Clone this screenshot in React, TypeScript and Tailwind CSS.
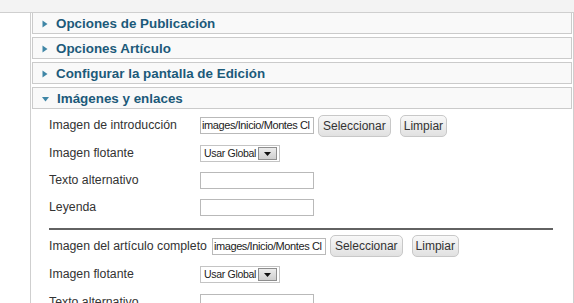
import React from 'react'

// ─── Small pieces ─────────────────────────────────────────────────────────────

function Arrow({ open }: { open?: boolean }) {
  return open ? (
    <svg width="7" height="6" viewBox="0 0 7 6" className="flex-shrink-0">
      <path d="M0 1 L7 1 L3.5 5.5 Z" fill="#3f86a6" />
    </svg>
  ) : (
    <svg width="6" height="8" viewBox="0 0 6 8" className="flex-shrink-0">
      <path d="M0.5 0.5 L5.5 4 L0.5 7.5 Z" fill="#3f86a6" />
    </svg>
  )
}

function PanelHeader({ title, open, first }: { title: string; open?: boolean; first?: boolean }) {
  return (
    <div
      className={`flex items-center bg-[#f9f9f9] border border-[#cbcbcb] ${
        first ? 'border-t-0 h-[21px]' : 'h-[22px]'
      } mb-[3px] pl-[9px] pt-[2px] gap-[8px]`}
    >
      <Arrow open={open} />
      <span className="text-[13.4px] font-bold text-[#1c5a7a] leading-none">{title}</span>
    </div>
  )
}

function Label({ children }: { children: React.ReactNode }) {
  return <span className="min-w-[146px] mr-[5px] text-[12.3px] text-[#333] whitespace-nowrap">{children}</span>
}

function TextInput({ value }: { value?: string }) {
  return (
    <div className="w-[114px] h-[17px] border border-[#b9b9b9] bg-white overflow-hidden flex items-center pl-[1px]">
      <span className="text-[11px] text-[#222] whitespace-nowrap tracking-[-0.4px] leading-none">{value}</span>
    </div>
  )
}

function Button({ children, className = '' }: { children: React.ReactNode; className?: string }) {
  return (
    <button
      className={`h-[22px] rounded-[5px] border border-[#c8c8c8] bg-gradient-to-b from-[#f8f8f8] to-[#e1e1e1] text-[12px] text-[#333] leading-none ${className}`}
    >
      {children}
    </button>
  )
}

function Select() {
  return (
    <div className="w-[80px] h-[17px] border border-[#c4c4c4] bg-white flex items-center justify-between pl-[3px] pr-[2px]">
      <span className="text-[10.5px] text-[#222] leading-none tracking-[-0.3px] whitespace-nowrap">Usar Global</span>
      <div className="w-[19px] h-[13px] border border-[#8e8e8e] bg-gradient-to-b from-[#ececec] to-[#cfcfcf] flex items-center justify-center">
        <svg width="7" height="4" viewBox="0 0 7 4">
          <path d="M0 0 L7 0 L3.5 4 Z" fill="#111" />
        </svg>
      </div>
    </div>
  )
}

function ImageBlock({ label, second }: { label: string; second?: boolean }) {
  return (
    <>
      <div className={`flex items-center ${second ? 'h-[26px]' : 'h-[27px]'}`}>
        <Label>{label}</Label>
        <TextInput value="images/Inicio/Montes Cl" />
        <Button className="ml-[4px] px-[4px]">Seleccionar</Button>
        <Button className="ml-[9px] px-[3px]">Limpiar</Button>
      </div>
      <div className={`flex items-center ${second ? 'h-[31px]' : 'h-[29px]'}`}>
        <Label>Imagen flotante</Label>
        <Select />
      </div>
      <div className="flex items-center h-[25px]">
        <Label>Texto alternativo</Label>
        <TextInput />
      </div>
      {!second && (
        <div className="flex items-center h-[28px]">
          <Label>Leyenda</Label>
          <TextInput />
        </div>
      )}
    </>
  )
}

// ─── Main ─────────────────────────────────────────────────────────────────────

export default function App() {
  return (
    <div className="w-[574px] h-[303px] overflow-hidden bg-white font-['Liberation_Sans',Arial,sans-serif]">
      {/* Top strip */}
      <div className="h-[13px] bg-[#f3f3f3] border-b border-[#cfcfcf]" />

      <div className="ml-[30px] w-[544px] h-[290px] border-l border-r border-[#cfcfcf] px-[1px]">
        <PanelHeader title="Opciones de Publicación" first />
        <PanelHeader title="Opciones Artículo" />
        <PanelHeader title="Configurar la pantalla de Edición" />
        <PanelHeader title="Imágenes y enlaces" open />

        <div className="pl-[17px]">
          <ImageBlock label="Imagen de introducción" />
          <div className="mt-[7px] mb-[3px] w-[504px] h-[2px] bg-[#626262]" />
          <ImageBlock label="Imagen del artículo completo" second />
        </div>
      </div>
    </div>
  )
}
